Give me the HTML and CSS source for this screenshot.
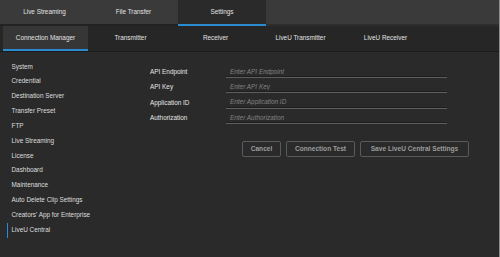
FILE: index.html
```html
<!DOCTYPE html>
<html>
<head>
  <meta charset="UTF-8">
  <title>Settings - LiveU Central</title>
  <link rel="stylesheet" href="styles.css">
</head>
<body>
<div class="app">

  <div class="main-tabs">
    <div class="main-tab">Live Streaming</div>
    <div class="main-tab">File Transfer</div>
    <div class="main-tab active">Settings</div>
  </div>

  <div class="sub-tabs">
    <div class="sub-tab active">Connection Manager</div>
    <div class="sub-tab">Transmitter</div>
    <div class="sub-tab">Receiver</div>
    <div class="sub-tab">LiveU Transmitter</div>
    <div class="sub-tab">LiveU Receiver</div>
  </div>

  <div class="content">
    <ul class="side-menu">
      <li>System</li>
      <li>Credential</li>
      <li>Destination Server</li>
      <li>Transfer Preset</li>
      <li>FTP</li>
      <li>Live Streaming</li>
      <li>License</li>
      <li>Dashboard</li>
      <li>Maintenance</li>
      <li>Auto Delete Clip Settings</li>
      <li>Creators' App for Enterprise</li>
      <li class="active">LiveU Central</li>
    </ul>

    <div class="panel">
      <div class="form">
        <div class="form-row">
          <label>API Endpoint</label>
          <input type="text" placeholder="Enter API Endpoint">
        </div>
        <div class="form-row">
          <label>API Key</label>
          <input type="text" placeholder="Enter API Key">
        </div>
        <div class="form-row">
          <label>Application ID</label>
          <input type="text" placeholder="Enter Application ID">
        </div>
        <div class="form-row">
          <label>Authorization</label>
          <input type="text" placeholder="Enter Authorization">
        </div>
      </div>
      <div class="buttons">
        <button class="btn btn-cancel">Cancel</button>
        <button class="btn btn-test">Connection Test</button>
        <button class="btn btn-save">Save LiveU Central Settings</button>
      </div>
    </div>
  </div>

</div>
</body>
</html>
```

FILE: styles.css
```css
html, body {
  margin: 0;
  padding: 0;
  background: #2a2a2a;
}

body {
  font-family: "Liberation Sans", Arial, sans-serif;
  font-size: 6.4px;
  color: #dcdcdc;
}

.app {
  width: 499px;
  height: 257px;
  border-right: 1px solid #8c8c8c;
  background: #2a2a2a;
  display: flex;
  flex-direction: column;
}

/* top level tabs */
.main-tabs {
  display: flex;
  height: 26px;
  background: #3a3a3a;
}
.main-tab {
  width: 89px;
  height: 24px;
  line-height: 24px;
  text-align: center;
  color: #e2e2e2;
  border-bottom: 2px solid #222;
}
.main-tab.active {
  width: 88px;
  background: #2a2a2a;
  border-bottom-color: #2a8bd0;
}
.main-tabs::after {
  content: "";
  flex: 1;
  border-bottom: 2px solid #2e2e2e;
  height: 24px;
}

/* second level tabs */
.sub-tabs {
  display: flex;
  height: 25px;
  padding-left: 3px;
  background: #262626;
  border-bottom: 1px solid #1b1b1b;
}
.sub-tab {
  width: 85px;
  height: 23px;
  line-height: 23px;
  text-align: center;
  color: #e2e2e2;
  border-bottom: 2px solid transparent;
}
.sub-tab.active {
  background: #363636;
  border-bottom-color: #2a8bd0;
}

/* body */
.content {
  flex: 1;
  display: flex;
}

.side-menu {
  list-style: none;
  margin: 0;
  padding: 7.5px 0 0 7px;
  width: 133px;
}
.side-menu li {
  height: 14.85px;
  line-height: 14.85px;
  padding-left: 3.5px;
  border-left: 1.5px solid transparent;
  color: #dedede;
}
.side-menu li.active {
  border-left-color: #2a8bd0;
}

.panel {
  width: 319px;
  padding: 13px 0 0 10px;
}

.form-row {
  display: flex;
  align-items: flex-start;
  height: 15.4px;
}
.form-row label {
  width: 76px;
  line-height: 14px;
  color: #e6e6e6;
}
.form-row input {
  width: 221px;
  height: 13px;
  margin: 0;
  padding: 0 0 0 4px;
  box-sizing: border-box;
  border: none;
  border-bottom: 1.5px solid #5e5e5e;
  box-shadow: inset 0 -1px 0 #1e1e1e;
  background: transparent;
  font-family: "Liberation Sans", Arial, sans-serif;
  font-size: 6.4px;
  font-style: italic;
  color: #ccc;
  outline: none;
}
.form-row input::placeholder {
  color: #828282;
  font-style: italic;
}

.buttons {
  display: flex;
  justify-content: flex-end;
  gap: 5px;
  margin-top: 14px;
}
.btn {
  height: 16px;
  padding: 0;
  background: #2a2a2a;
  border: 1px solid #5a5a5a;
  border-radius: 2px;
  color: #9c9c9c;
  font-family: "Liberation Sans", Arial, sans-serif;
  font-size: 6.6px;
  font-weight: bold;
}
.btn-cancel { width: 39px; }
.btn-test { width: 69px; }
.btn-save { width: 109px; }
```
